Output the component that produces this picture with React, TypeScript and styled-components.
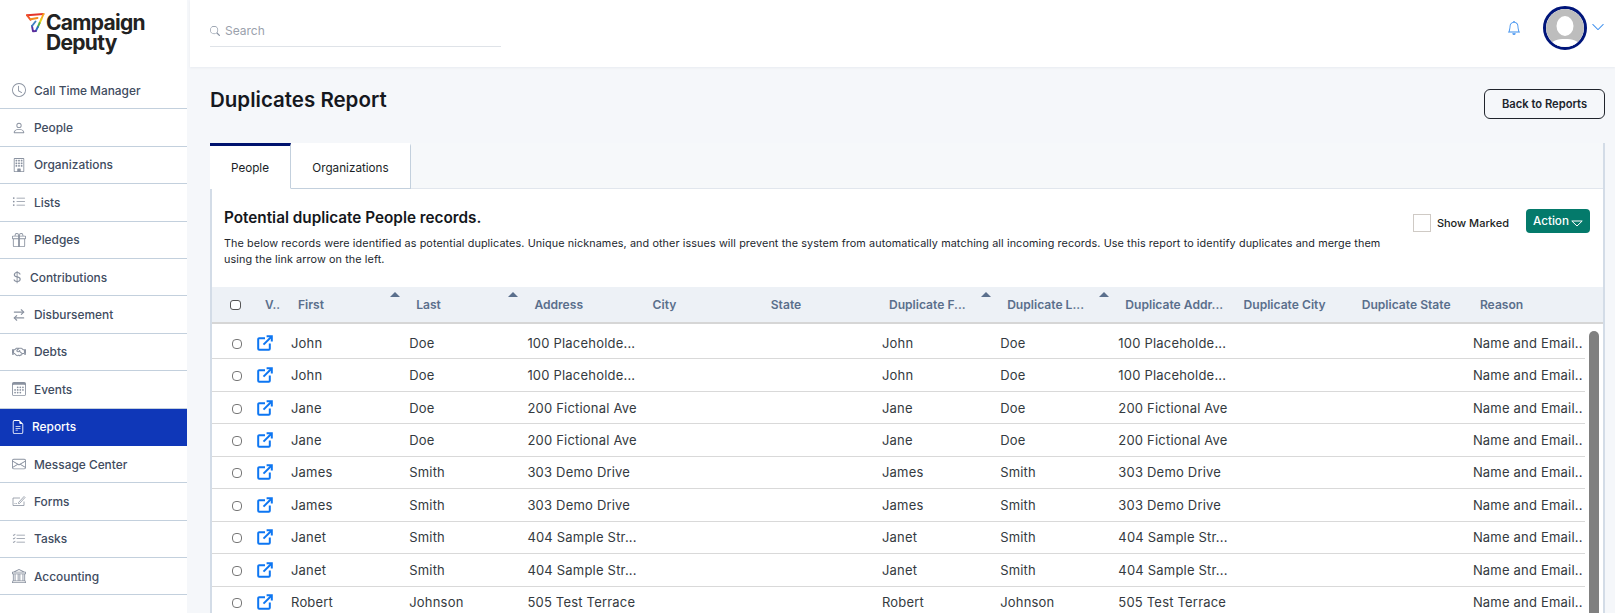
import styled, { createGlobalStyle } from "styled-components";
import {
  BsClock,
  BsPerson,
  BsBuilding,
  BsListUl,
  BsGift,
  BsCurrencyDollar,
  BsCalendar3,
  BsFileEarmarkText,
  BsEnvelope,
  BsListCheck,
  BsBank,
  BsSearch,
  BsBell,
  BsChevronDown,
} from "react-icons/bs";
import { FaRegHandshake } from "react-icons/fa";
import { ArrowRightLeft } from "lucide-react";

function FormsIcon({ size }: { size: number }) {
  return (
    <svg width={size} height={size} viewBox="0 0 14 14" fill="none" stroke="currentColor" strokeWidth="0.8">
      <path d="M8 4H1v7.5h11V7.5" />
      <path d="M6.5 8.5 12 2.5l1 1-5.5 6H6.5Z" />
      <path d="M2.5 9.5h2.5" strokeDasharray="1 0.7" />
    </svg>
  );
}

const navItems = [
  { label: "Call Time Manager", icon: BsClock, width: 12 },
  { label: "People", icon: BsPerson, width: 12 },
  { label: "Organizations", icon: BsBuilding, width: 12 },
  { label: "Lists", icon: BsListUl, width: 12 },
  { label: "Pledges", icon: BsGift, width: 12 },
  { label: "Contributions", icon: BsCurrencyDollar, width: 8 },
  { label: "Disbursement", icon: ArrowRightLeft, width: 12 },
  { label: "Debts", icon: FaRegHandshake, width: 12 },
  { label: "Events", icon: BsCalendar3, width: 12 },
  { label: "Reports", icon: BsFileEarmarkText, width: 10, active: true },
  { label: "Message Center", icon: BsEnvelope, width: 12 },
  { label: "Forms", icon: FormsIcon, width: 12 },
  { label: "Tasks", icon: BsListCheck, width: 12 },
  { label: "Accounting", icon: BsBank, width: 12 },
];

const columns = [
  { label: "First", sorted: true },
  { label: "Last", sorted: true },
  { label: "Address" },
  { label: "City" },
  { label: "State" },
  { label: "Duplicate F...", sorted: true },
  { label: "Duplicate L...", sorted: true },
  { label: "Duplicate Addr..." },
  { label: "Duplicate City" },
  { label: "Duplicate State" },
  { label: "Reason" },
];

const rows = [
  ["John", "Doe", "100 Placeholde..."],
  ["John", "Doe", "100 Placeholde..."],
  ["Jane", "Doe", "200 Fictional Ave"],
  ["Jane", "Doe", "200 Fictional Ave"],
  ["James", "Smith", "303 Demo Drive"],
  ["James", "Smith", "303 Demo Drive"],
  ["Janet", "Smith", "404 Sample Str..."],
  ["Janet", "Smith", "404 Sample Str..."],
  ["Robert", "Johnson", "505 Test Terrace"],
];

function LogoMark() {
  return (
    <svg width="19" height="20" viewBox="0 0 19 20" fill="none" strokeWidth="1.9" strokeLinecap="round" strokeLinejoin="round">
      <path d="M1 2.2 17.5 1" stroke="#e5352b" />
      <path d="M1 2.2 4.6 6.8" stroke="#f0562a" />
      <path d="M4.6 6.2 11.5 5" stroke="#f28c1e" />
      <path d="M17.5 1 15.4 6" stroke="#f6a81c" />
      <path d="M15.4 6 13.6 10" stroke="#e8cf1d" />
      <path d="M13.6 10 11.8 14" stroke="#4fae4a" />
      <path d="M11.8 14 9.8 18" stroke="#2b6fc4" />
      <path d="M9.8 18 7 18.4 6 13" stroke="#5b2d9c" />
      <path d="M6 13 9.5 8.5" stroke="#3f7fc0" />
    </svg>
  );
}

function OpenIcon() {
  return (
    <svg width="16" height="16" viewBox="0 0 16 16" fill="none" stroke="#0d76f2" strokeWidth="2">
      <path d="M8 3.2H2.2a1 1 0 0 0-1 1v9.6a1 1 0 0 0 1 1h9.6a1 1 0 0 0 1-1V8.5" />
      <path d="M6.5 9.6 14.4 1.7" />
      <path d="M9.6 1.2h5.2v5.2" />
    </svg>
  );
}

function AvatarFigure() {
  return (
    <svg width="38" height="38" viewBox="0 0 38 38">
      <circle cx="19" cy="19" r="19" fill="#bdbdbd" />
      <ellipse cx="19" cy="17" rx="8.5" ry="10" fill="#fff" />
      <path d="M3 38c2-7 9-8 16-8s14 1 16 8Z" fill="#fff" />
    </svg>
  );
}

export default function App() {
  return (
    <Page>
      <GlobalStyle />
      <Sidebar>
        <LogoArea>
          <LogoMark />
          <LogoText>
            Campaign
            <br />
            Deputy
          </LogoText>
        </LogoArea>
        <nav>
          {navItems.map((item) => (
            <NavRow key={item.label} $active={item.active}>
              <NavIcon $width={item.width}>
                <item.icon size={14} />
              </NavIcon>
              {item.label}
            </NavRow>
          ))}
        </nav>
      </Sidebar>

      <Content>
        <TopBar>
          <SearchBox>
            <BsSearch size={10} color="#8a94a3" />
            <span>Search</span>
          </SearchBox>
          <BellButton>
            <BsBell size={14} />
          </BellButton>
          <Avatar>
            <AvatarFigure />
          </Avatar>
          <Caret>
            <BsChevronDown size={14} />
          </Caret>
        </TopBar>

        <Main>
          <TitleRow>
            <Title>Duplicates Report</Title>
            <BackButton>Back to Reports</BackButton>
          </TitleRow>

          <Card>
            <TabBar>
              <Tab $active>People</Tab>
              <Tab>Organizations</Tab>
            </TabBar>

            <Intro>
              <IntroText>
                <Heading>Potential duplicate People records.</Heading>
                <Description>
                  The below records were identified as potential duplicates. Unique nicknames, and
                  other issues will prevent the system from automatically matching all incoming
                  records. Use this report to identify duplicates and merge them using the link
                  arrow on the left.
                </Description>
              </IntroText>
              <Controls>
                <MarkBox />
                <MarkLabel>Show Marked</MarkLabel>
                <ActionButton>
                  Action
                  <svg width="12" height="7" viewBox="0 0 12 7" fill="none" stroke="#fff">
                    <path d="M0.8 1h10.4L6 6Z" />
                  </svg>
                </ActionButton>
              </Controls>
            </Intro>

            <Table>
              <HeadRow>
                <SelectCell>
                  <HeadCheck type="checkbox" />
                  <ViewLabel>V..</ViewLabel>
                </SelectCell>
                {columns.map((col) => (
                  <HeadCell key={col.label}>
                    {col.label}
                    {col.sorted && <SortArrow />}
                  </HeadCell>
                ))}
              </HeadRow>
              <Scrollbar />
              <RowList>
                {rows.map((row, i) => (
                  <BodyRow key={i}>
                    <SelectCell>
                      <RowCheck type="checkbox" />
                      <OpenIcon />
                    </SelectCell>
                    <Cell>{row[0]}</Cell>
                    <Cell>{row[1]}</Cell>
                    <Cell>{row[2]}</Cell>
                    <Cell />
                    <Cell />
                    <Cell>{row[0]}</Cell>
                    <Cell>{row[1]}</Cell>
                    <Cell>{row[2]}</Cell>
                    <Cell />
                    <Cell />
                    <Cell>Name and Email..</Cell>
                  </BodyRow>
                ))}
              </RowList>
            </Table>
          </Card>
        </Main>
      </Content>
    </Page>
  );
}

const GlobalStyle = createGlobalStyle`
  html, body {
    margin: 0;
    height: 100%;
    background: #f5f7fa;
    font-family: "Inter", "Liberation Sans", sans-serif;
    overflow: hidden;
  }
  * {
    box-sizing: border-box;
  }
`;

const Page = styled.div`
  display: flex;
  height: 613px;
  overflow: hidden;
`;

const Sidebar = styled.aside`
  flex: 0 0 187px;
  background: #fff;
`;

const LogoArea = styled.div`
  display: flex;
  align-items: flex-start;
  height: 72px;
  padding: 13px 0 0 26px;
  gap: 1px;
`;

const LogoText = styled.div`
  font-size: 21px;
  font-weight: 700;
  line-height: 20px;
  letter-spacing: -0.7px;
  color: #222;
`;

const NavRow = styled.div<{ $active?: boolean }>`
  display: flex;
  align-items: center;
  gap: 9px;
  height: 37.4px;
  padding-left: 13px;
  border-bottom: 1px solid ${(p) => (p.$active ? "#0f37b8" : "#c3d0dd")};
  background: ${(p) => (p.$active ? "#0f37b8" : "#fff")};
  color: ${(p) => (p.$active ? "#fff" : "#414c5f")};
  font-size: 11.9px;
  font-weight: 500;

  svg {
    color: ${(p) => (p.$active ? "#fff" : "#8a92a0")};
    flex-shrink: 0;
  }
`;

const NavIcon = styled.span<{ $width: number }>`
  display: flex;
  justify-content: center;
  width: ${(p) => p.$width}px;
`;

const Content = styled.div`
  flex: 1;
  min-width: 0;
  margin-left: 3px;
  display: flex;
  flex-direction: column;
`;

const TopBar = styled.header`
  flex: 0 0 67px;
  display: flex;
  align-items: center;
  background: #fff;
  padding: 0 10px 0 20px;
  box-shadow: 0 1px 2px #e8ebf0;
`;

const SearchBox = styled.div`
  display: flex;
  align-items: center;
  gap: 5px;
  width: 291px;
  height: 33px;
  margin-top: 14px;
  align-self: flex-start;
  border-bottom: 1px solid #dfe3e8;
  color: #9aa1ac;
  font-size: 12px;
  padding-top: 1px;
`;

const BellButton = styled.div`
  margin: 0 22px 12px auto;
  display: flex;
  color: #3d8fee;
`;

const Avatar = styled.div`
  width: 44px;
  height: 44px;
  border-radius: 50%;
  border: 3px solid #00157a;
  overflow: hidden;
  margin-bottom: 12px;
`;

const Caret = styled.div`
  display: flex;
  margin: 0 0 14px 4px;
  color: #3d8fee;
`;

const Main = styled.main`
  flex: 1;
  min-height: 0;
  padding: 0 10px 0 20px;
`;

const TitleRow = styled.div`
  display: flex;
  justify-content: space-between;
  align-items: flex-start;
  height: 76px;
  padding-top: 22px;
`;

const Title = styled.h1`
  margin: 0;
  font-size: 20.5px;
  font-weight: 600;
  line-height: 22px;
  color: #15181e;
`;

const BackButton = styled.button`
  width: 121px;
  height: 30px;
  background: transparent;
  border: 1px solid #20242c;
  border-radius: 6px;
  color: #20242c;
  font-family: inherit;
  font-size: 11.2px;
  font-weight: 600;
`;

const Card = styled.section`
  border-left: 2px solid #d3dce7;
  border-right: 2px solid #d3dce7;
  background: #fff;
  height: 480px;
`;

const TabBar = styled.div`
  display: flex;
  height: 46px;
  margin-left: -2px;
  background: #f6f8fa;
  border-bottom: 1px solid #e1e6ed;
`;

const Tab = styled.div<{ $active?: boolean }>`
  display: flex;
  align-items: center;
  justify-content: center;
  height: 46px;
  width: ${(p) => (p.$active ? "81px" : "120px")};
  background: #fff;
  border-top: 3px solid ${(p) => (p.$active ? "#00126e" : "#fff")};
  border-right: 1px solid #c3d0dd;
  border-bottom: 1px solid ${(p) => (p.$active ? "#fff" : "#c3d0dd")};
  color: #1b1f27;
  font-size: 11.7px;
  padding-top: 2px;
`;

const Intro = styled.div`
  display: flex;
  justify-content: space-between;
  height: 98px;
  padding: 20px 14px 0 12px;
`;

const IntroText = styled.div`
  width: 1160px;
`;

const Heading = styled.h2`
  margin: 0 0 9px;
  font-size: 15.3px;
  font-weight: 600;
  line-height: 18px;
  color: #14171c;
`;

const Description = styled.p`
  margin: 0;
  font-size: 10.8px;
  line-height: 16px;
  letter-spacing: 0.1px;
  color: #23272e;
`;

const Controls = styled.div`
  display: flex;
  align-items: flex-start;
  margin-right: -1px;
`;

const MarkBox = styled.div`
  width: 18px;
  height: 18px;
  margin-top: 5px;
  margin-left: -1px;
  border: 1px solid #cfcac5;
`;

const MarkLabel = styled.span`
  margin: 7px 17px 0 6px;
  font-size: 11px;
  line-height: 15px;
  font-weight: 500;
  color: #1a1d22;
`;

const ActionButton = styled.button`
  display: flex;
  align-items: center;
  gap: 2px;
  width: 64px;
  height: 24px;
  padding: 0 0 0 7px;
  border: none;
  border-radius: 4px;
  background: #047a6b;
  color: #fff;
  font-family: inherit;
  font-size: 11.7px;
  font-weight: 500;

  svg {
    margin-top: 4px;
  }
`;

const Table = styled.div`
  position: relative;
`;

const HeadRow = styled.div`
  display: grid;
  grid-template-columns: 79px repeat(11, 118.2px);
  align-items: center;
  height: 37px;
  background: #edf1f6;
  border-bottom: 2px solid #d6d6d6;
`;

const RowList = styled.div`
  padding-top: 3px;
`;

const BodyRow = styled.div`
  display: grid;
  grid-template-columns: 79px repeat(11, 118.2px);
  align-items: center;
  height: 32.45px;
  margin-right: 18px;
  border-bottom: 1px solid #d9d9d9;
`;

const SelectCell = styled.div`
  display: flex;
  align-items: center;
  padding-left: 18px;
`;

const HeadCheck = styled.input`
  appearance: none;
  width: 11px;
  height: 10px;
  margin: 0 24px 0 0;
  border: 1px solid #555;
  border-radius: 3px;
  background: #fff;
`;

const RowCheck = styled(HeadCheck)`
  width: 10px;
  height: 10px;
  margin: 2px 15px 0 2px;
  border-color: #777;
  border-radius: 4px;
`;

const ViewLabel = styled.span`
  font-size: 11.8px;
  font-weight: 600;
  color: #5a6f8c;
`;

const HeadCell = styled.div`
  position: relative;
  padding-left: 7px;
  font-size: 12.1px;
  font-weight: 600;
  color: #5a6f8c;
  white-space: nowrap;
`;

const SortArrow = styled.span`
  position: absolute;
  top: -5px;
  left: 99px;
  border-left: 5px solid transparent;
  border-right: 5px solid transparent;
  border-bottom: 5px solid #5a6f8c;
`;

const Cell = styled.div`
  font-size: 13px;
  letter-spacing: 0.2px;
  color: #343a40;
  white-space: nowrap;
`;

const Scrollbar = styled.div`
  position: absolute;
  top: 44px;
  right: 4px;
  width: 10px;
  height: 400px;
  border-radius: 5px 5px 0 0;
  background: #808080;
`;
